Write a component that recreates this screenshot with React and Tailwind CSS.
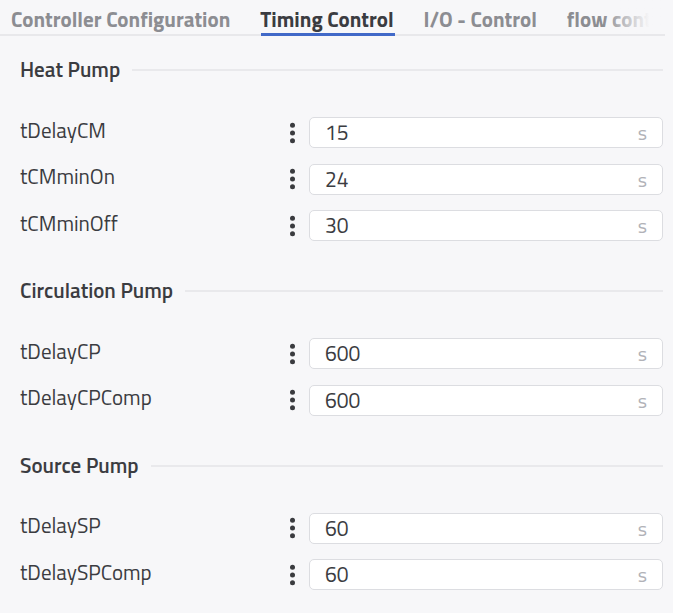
import React from "react";

const FONT = { fontFamily: '"Titillium Web", "Fira Sans", "Open Sans", sans-serif' };

function Dots() {
  return (
    <svg width="7" height="22" viewBox="0 0 7 22" className="shrink-0">
      <circle cx="3.5" cy="3.3" r="2.5" fill="#3a3b3f" />
      <circle cx="3.5" cy="11" r="2.5" fill="#3a3b3f" />
      <circle cx="3.5" cy="18.7" r="2.5" fill="#3a3b3f" />
    </svg>
  );
}

function Row({ label, value }) {
  return (
    <div className="flex items-center h-[31px]">
      <div className="w-[269px] text-[21px] leading-[31px] text-[#3b3c41] -mt-[5px]">{label}</div>
      <div className="w-[20px] flex justify-start">
        <Dots />
      </div>
      <div className="flex-1 h-[31px] bg-white border border-[#dcdde1] rounded-[5px] flex items-center justify-between pl-[15px] pr-[15px]">
        <span className="text-[21px] leading-[29px] text-[#3b3c41]">{value}</span>
        <span className="text-[20px] leading-[29px] text-[#b1b2b7]">s</span>
      </div>
    </div>
  );
}

function Section({ title, rows }) {
  return (
    <div className="flex flex-col">
      <div className="flex items-center gap-[12px] h-[24px]">
        <span className="text-[21px] font-semibold text-[#3b3c41] whitespace-nowrap leading-[24px] -mt-[2px]">{title}</span>
        <div className="flex-1 h-[2px] bg-[#e9e9ec]" />
      </div>
      <div className="flex flex-col gap-[15.5px] mt-[35px]">
        {rows.map((r) => (
          <Row key={r[0]} label={r[0]} value={r[1]} />
        ))}
      </div>
    </div>
  );
}

export default function App() {
  return (
    <div className="w-[673px] h-[613px] bg-[#f7f7f9] overflow-hidden" style={FONT}>
      <div className="relative mr-[8px] h-[36px]">
        <div className="flex h-[34px] pl-[11px] gap-[30px] text-[21px] font-bold overflow-hidden">
          <div className="h-[34px] leading-[34px] pt-[2px] text-[#8c8d92] whitespace-nowrap">Controller Configuration</div>
          <div className="h-[34px] leading-[34px] pt-[2px] text-[#3b3c41] whitespace-nowrap">Timing Control</div>
          <div className="h-[34px] leading-[34px] pt-[2px] text-[#8c8d92] whitespace-nowrap">I/O - Control</div>
          <div className="h-[34px] leading-[34px] pt-[2px] text-[#8c8d92] whitespace-nowrap">flow control</div>
        </div>
        <div className="absolute right-0 top-0 h-[34px] w-[62px] bg-gradient-to-r from-[#f7f7f9]/0 to-[#f7f7f9] to-75%" />
        <div className="absolute left-0 right-0 top-[34px] h-[2px] bg-[#e8e8eb]" />
        <div className="absolute left-[261px] w-[134px] top-[33px] h-[3px] bg-[#4169c8]" />
      </div>
      <div className="pl-[20px] pr-[10px] pt-[22px] flex flex-col gap-[38px]">
        <Section title="Heat Pump" rows={[["tDelayCM", "15"], ["tCMminOn", "24"], ["tCMminOff", "30"]]} />
        <Section title="Circulation Pump" rows={[["tDelayCP", "600"], ["tDelayCPComp", "600"]]} />
        <Section title="Source Pump" rows={[["tDelaySP", "60"], ["tDelaySPComp", "60"]]} />
      </div>
    </div>
  );
}
